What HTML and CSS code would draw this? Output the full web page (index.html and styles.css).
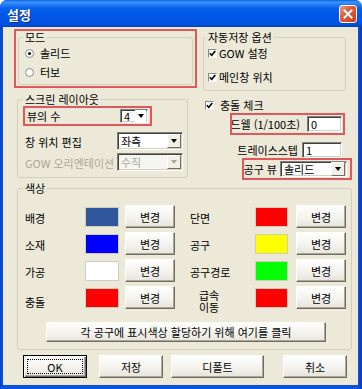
FILE: index.html
```html
<!DOCTYPE html>
<html lang="ko">
<head>
<meta charset="utf-8">
<title>설정</title>
<link rel="stylesheet" href="styles.css">
</head>
<body>
<div class="window">
  <div class="titlebar">
    <span class="title">설정</span>
    <span class="close-btn"><svg width="10" height="10" viewBox="0 0 10 10"><path d="M1.5 1.5L8.5 8.5M8.5 1.5L1.5 8.5" stroke="#fff" stroke-width="2" stroke-linecap="square"/></svg></span>
  </div>
  <div class="client">
    <div class="top-row">
      <div class="redbox mode-box">
        <fieldset class="group mode-group">
          <legend>모드</legend>
          <div class="opt-row radio-row"><svg class="radio" width="9" height="9" viewBox="0 0 9 9"><circle cx="4.5" cy="4.5" r="4" fill="#fff" stroke="#8a8a84"/><circle cx="4.5" cy="4.5" r="1.6" fill="#000"/></svg>솔리드</div>
          <div class="opt-row radio-row second"><svg class="radio" width="9" height="9" viewBox="0 0 9 9"><circle cx="4.5" cy="4.5" r="4" fill="#fff" stroke="#8a8a84"/></svg>터보</div>
        </fieldset>
      </div>
      <fieldset class="group autosave">
        <legend>자동저장 옵션</legend>
        <div class="opt-row check-row"><span class="check"><svg width="7" height="7" viewBox="0 0 7 7"><path d="M0.8 3.2L2.8 5.3L6.3 1" stroke="#000" stroke-width="1.6" fill="none"/></svg></span>GOW 설정</div>
        <div class="opt-row check-row second"><span class="check"><svg width="7" height="7" viewBox="0 0 7 7"><path d="M0.8 3.2L2.8 5.3L6.3 1" stroke="#000" stroke-width="1.6" fill="none"/></svg></span>메인창 위치</div>
      </fieldset>
    </div>

    <div class="mid-row">
      <fieldset class="group layout">
        <legend>스크린 레이아웃</legend>
        <div class="redbox views-box">
          <span>뷰의 수</span>
          <div class="combo small"><span class="val">4</span><span class="arrow"><i></i></span></div>
        </div>
        <div class="field-row first">
          <span class="field-label">창 위치 편집</span>
          <div class="combo wide"><span class="val">좌측</span><span class="arrow"><i></i></span></div>
        </div>
        <div class="field-row">
          <span class="field-label disabled">GOW 오리엔테이션</span>
          <div class="combo wide disabled"><span class="val">수직</span><span class="arrow"><i></i></span></div>
        </div>
      </fieldset>

      <div class="collision">
        <div class="opt-row collide-row"><span class="check"><svg width="7" height="7" viewBox="0 0 7 7"><path d="M0.8 3.2L2.8 5.3L6.3 1" stroke="#000" stroke-width="1.6" fill="none"/></svg></span>충돌 체크</div>
        <div class="redbox dwell-box">
          <div class="clip dwell-label"><span>드웰 (1/100초)</span></div>
          <div class="textbox dwell-input">0</div>
        </div>
        <div class="trace-row">
          <div class="clip trace-label"><span>트레이스스텝</span></div>
          <div class="textbox trace-input">1</div>
        </div>
        <div class="redbox toolview-box">
          <div class="clip toolview-label"><span>공구 뷰</span></div>
          <div class="combo toolview"><span class="val">솔리드</span><span class="arrow"><i></i></span></div>
        </div>
      </div>
    </div>

    <fieldset class="group colors">
      <legend>색상</legend>
      <div class="color-grid">
        <span class="c-label">배경</span><span class="swatch" style="background:#30579b"></span><button class="btn change">변경</button>
        <span class="c-label right">단면</span><span class="swatch" style="background:#ff0000"></span><button class="btn change">변경</button>

        <span class="c-label">소재</span><span class="swatch" style="background:#0000ff"></span><button class="btn change">변경</button>
        <span class="c-label right">공구</span><span class="swatch" style="background:#ffff00"></span><button class="btn change">변경</button>

        <span class="c-label">가공</span><span class="swatch" style="background:#ffffff"></span><button class="btn change">변경</button>
        <span class="c-label right">공구경로</span><span class="swatch" style="background:#00ff00"></span><button class="btn change">변경</button>

        <span class="c-label low">충돌</span><span class="swatch" style="background:#ff0000"></span><button class="btn change">변경</button>
        <span class="c-label right two-line">급속<br>이동</span><span class="swatch" style="background:#ff0000"></span><button class="btn change">변경</button>
      </div>
      <button class="btn assign">각 공구에 표시색상 할당하기 위해 여기를 클릭</button>
    </fieldset>

    <div class="buttons">
      <button class="btn default b-ok">OK</button>
      <button class="btn b-save">저장</button>
      <button class="btn b-default">디폴트</button>
      <button class="btn b-cancel">취소</button>
    </div>
  </div>
</div>
</body>
</html>
```

FILE: styles.css
```css
* { box-sizing: border-box; }
html, body { margin: 0; padding: 0; }
body {
  width: 362px;
  height: 389px;
  overflow: hidden;
  background: #ffffff;
  font-family: "Noto Sans CJK KR", "Noto Sans", sans-serif;
  font-size: 11px;
  line-height: 12px;
  color: #000;
}

.window {
  width: 362px;
  height: 389px;
  display: flex;
  flex-direction: column;
  background: linear-gradient(to right, #0841c8, #0a53e0 3px, #0a53e0 calc(100% - 4px), #0836b8);
  border-radius: 7px 7px 0 0;
  overflow: hidden;
}

.titlebar {
  height: 27px;
  flex: none;
  display: flex;
  align-items: flex-start;
  justify-content: space-between;
  padding: 0 5px 0 7px;
  background: linear-gradient(to bottom, #0a5fe0 0px, #3d95ff 2px, #2a82f8 4px, #0a62ec 8px, #0058e8 14px, #0055e3 20px, #0050dc 25px, #0040c0 27px);
}
.title {
  margin-top: 7px;
  color: #fff;
  font-weight: bold;
  font-size: 13px;
  line-height: 15px;
  text-shadow: 1px 1px 0 #0a2a9a;
}
.close-btn {
  margin-top: 5px;
  width: 18px;
  height: 18px;
  border: 1px solid #fff;
  border-radius: 3px;
  background: linear-gradient(135deg, #f0a088 0%, #e2623f 35%, #cc3d15 100%);
  display: flex;
  align-items: center;
  justify-content: center;
}

.client {
  flex: 1;
  margin: 0 4px 4px 3px;
  background: #ece9d8;
  padding-top: 2px;
}

/* red highlight boxes */
.redbox { border: 2px solid #e2575a; }

/* group boxes */
.group {
  margin: 0;
  padding: 0;
  min-width: 0;
  border: 1px solid #d0d0bf;
  border-radius: 3px;
}
.group legend {
  padding: 0 2px;
  line-height: 12px;
  height: 12px;
}

.opt-row {
  display: flex;
  align-items: center;
  height: 16px;
  white-space: nowrap;
}

.check {
  width: 9px;
  height: 9px;
  flex: none;
  background: #fff;
  border: 1px solid;
  border-color: #8a8a84 #f4f4f0 #f4f4f0 #8a8a84;
  display: flex;
  align-items: center;
  justify-content: center;
}

/* top row */
.top-row {
  display: flex;
  align-items: flex-start;
  margin-left: 11px;
}
.mode-box {
  width: 183px;
  height: 59px;
  padding: 0 2px;
}
.mode-group { height: 54px; padding-top: 2px; }
.mode-group legend { margin-left: 4px; }
.radio-row { margin-left: 6px; }
.radio-row .radio { margin-right: 6px; flex: none; }
.radio-row.second { margin-top: 3px; }

.autosave {
  margin: 2px 0 0 6px;
  width: 143px;
  height: 60px;
  padding-top: 2px;
}
.autosave legend { margin-left: 2px; }
.check-row { margin-left: 4px; }
.check-row .check { margin-right: 2px; }
.check-row.second { margin-top: 8px; }

/* middle row */
.mid-row {
  display: flex;
  align-items: flex-start;
  margin-top: 2px;
}
.layout {
  margin-left: 14px;
  width: 171px;
  height: 85px;
}
.layout legend { margin-left: 5px; }
.views-box {
  margin: 1px 0 0 5px;
  width: 129px;
  height: 20px;
  padding: 0 2px;
  display: flex;
  align-items: center;
  justify-content: space-between;
}
.field-row {
  display: flex;
  align-items: center;
  margin: 3px 0 0 7px;
}
.field-row.first { margin-top: 6px; }
.field-label {
  width: 92px;
  flex: none;
  white-space: nowrap;
  padding-top: 1px;
}
.field-label.disabled {
  color: #aca899;
  overflow: hidden;
}

/* combo boxes */
.combo {
  display: flex;
  align-items: stretch;
  background: #fff;
  border: 1px solid;
  border-color: #808080 #fff #fff #808080;
  box-shadow: inset 1px 1px 0 #404040, inset -1px -1px 0 #d4d0c8;
  padding: 1px;
  flex: none;
}
.combo .val {
  flex: 1;
  padding-left: 2px;
  display: flex;
  align-items: center;
  white-space: nowrap;
}
.combo .arrow {
  width: 14px;
  flex: none;
  background: #f1efe6;
  border: 1px solid;
  border-color: #fff #716f64 #716f64 #fff;
  display: flex;
  align-items: center;
  justify-content: center;
}
.combo .arrow i {
  width: 0;
  height: 0;
  border-left: 3.5px solid transparent;
  border-right: 3.5px solid transparent;
  border-top: 4px solid #000;
}
.combo.small { width: 28px; height: 14px; padding: 0 1px 0 0; }
.combo.small .val { line-height: 11px; padding-left: 3px; }
.combo.small .arrow { width: 11px; border: none; background: #fff; }
.combo.wide { width: 66px; height: 18px; }
.combo.disabled { background: #f6f5f0; color: #aca899; }
.combo.disabled .arrow i { border-top-color: #aca899; }
.combo.toolview { width: 67px; height: 16px; margin-left: 2px; padding: 0 1px 0 1px; }
.combo.toolview .val { line-height: 11px; }

/* collision column */
.collision {
  margin-left: 15px;
  width: 149px;
}
.collide-row {
  margin: 5px 0 0 2px;
  height: 14px;
}
.collide-row .check { margin-right: 6px; }

.clip {
  display: flex;
  justify-content: flex-end;
  overflow: hidden;
  white-space: nowrap;
  flex: none;
}
.clip span { flex: none; }

.textbox {
  background: #fff;
  border: 1px solid;
  border-color: #808080 #fff #fff #808080;
  box-shadow: inset 1px 1px 0 #404040, inset -1px -1px 0 #d4d0c8;
  padding: 0 3px;
  line-height: 12px;
  display: flex;
  align-items: center;
  flex: none;
}

.dwell-box {
  margin: 1px 0 0 27px;
  width: 115px;
  height: 22px;
  display: flex;
  align-items: center;
}
.dwell-label { width: 71px; padding-right: 3px; }
.dwell-input { margin-left: 4px; width: 35px; height: 16px; }

.trace-row {
  display: flex;
  align-items: center;
  margin: 7px 0 0 30px;
}
.trace-label { width: 67px; padding-right: 2px; }
.trace-input { margin-left: 2px; width: 40px; height: 16px; }

.toolview-box {
  margin-left: 39px;
  width: 110px;
  height: 22px;
  display: flex;
  align-items: center;
}
.toolview-label { width: 34px; padding-right: 1px; }

/* colors */
.colors {
  margin: 2px 0 0 14px;
  width: 335px;
  padding: 11px 5px 7px 7px;
}
.colors legend { margin-left: -2px; }
.color-grid {
  display: grid;
  grid-template-columns: 60px 34px 56px 80px 33px 58px;
  grid-auto-rows: 23px;
  row-gap: 4px;
}
.c-label {
  padding-top: 7px;
  white-space: nowrap;
}
.c-label.low { padding-top: 10px; }
.c-label.right { padding-left: 15px; }
.c-label.two-line {
  padding-top: 3px;
  padding-left: 16px;
  line-height: 12px;
  text-align: center;
  width: 36px;
  box-sizing: content-box;
}
.swatch {
  height: 20px;
  margin-top: 2px;
  border: 1px solid #cfccc0;
}

/* buttons */
.btn {
  margin: 0;
  font: inherit;
  color: #000;
  padding: 0;
  background: linear-gradient(#fefefd, #f4f3ee 55%, #e6e4da);
  border: 1px solid;
  border-color: #fff #6f6d62 #6f6d62 #fff;
  box-shadow: inset -1px -1px 0 #aca899;
  display: flex;
  align-items: center;
  justify-content: center;
  white-space: nowrap;
}
.btn.change {
  width: 50px;
  height: 23px;
  justify-self: end;
}
.btn.assign {
  margin: 13px 0 0 21px;
  width: 280px;
  height: 20px;
}

.buttons {
  display: flex;
  margin-top: 5px;
}
.buttons .btn { height: 23px; }
.btn.default {
  border-color: #000;
  box-shadow: inset 1px 1px 0 #fff, inset -1px -1px 0 #6f6d62, inset -2px -2px 0 #aca899;
  outline: 1px dotted #000;
  outline-offset: -5px;
}
.b-ok { margin-left: 20px; width: 64px; }
.b-save { margin-left: 12px; width: 64px; }
.b-default { margin-left: 8px; width: 93px; }
.b-cancel { margin-left: 19px; width: 64px; }
```
